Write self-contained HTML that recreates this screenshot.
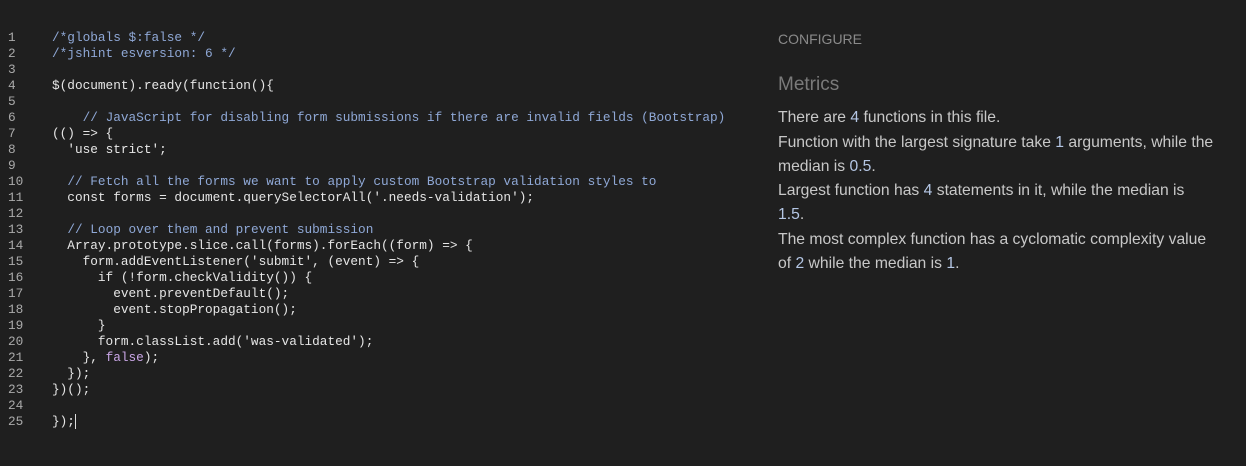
<!DOCTYPE html>
<html><head><style>
body{margin:0;width:1246px;height:466px;background:#1f1f1f;overflow:hidden;position:relative}
#code{position:absolute;left:0;top:30px;font:12.75px/16px "Liberation Mono",monospace;color:#e6e6e6;white-space:pre}
.ln{display:inline-block;width:52px;padding-left:8px;box-sizing:border-box;color:#aaa}
.c{color:#8fa8d6}.k{color:#c9a6e6}.s{color:#e8e8e8}
#side{position:absolute;left:778px;top:0;font-family:"Liberation Sans",sans-serif;color:#c8c8c8}
.cfg{position:absolute;top:31px;font-size:14px;color:#8a8a8a;white-space:nowrap}
.met{position:absolute;top:74px;font-size:19px;color:#7a7a7a}
.p{position:absolute;width:445px;font-size:15.7px;line-height:24px;color:#c8c8c8}
.n{color:#b4c6e4}
</style></head><body>
<div id="code"><span class="ln">1</span><span class="c">/*globals $:false */</span>
<span class="ln">2</span><span class="c">/*jshint esversion: 6 */</span>
<span class="ln">3</span>
<span class="ln">4</span>$(document).ready(function(){
<span class="ln">5</span>
<span class="ln">6</span>    <span class="c">// JavaScript for disabling form submissions if there are invalid fields (Bootstrap)</span>
<span class="ln">7</span>(() =&gt; {
<span class="ln">8</span>  <span class="s">'use strict'</span>;
<span class="ln">9</span>
<span class="ln">10</span>  <span class="c">// Fetch all the forms we want to apply custom Bootstrap validation styles to</span>
<span class="ln">11</span>  const forms = document.querySelectorAll('.needs-validation');
<span class="ln">12</span>
<span class="ln">13</span>  <span class="c">// Loop over them and prevent submission</span>
<span class="ln">14</span>  Array.prototype.slice.call(forms).forEach((form) =&gt; {
<span class="ln">15</span>    form.addEventListener('submit', (event) =&gt; {
<span class="ln">16</span>      if (!form.checkValidity()) {
<span class="ln">17</span>        event.preventDefault();
<span class="ln">18</span>        event.stopPropagation();
<span class="ln">19</span>      }
<span class="ln">20</span>      form.classList.add('was-validated');
<span class="ln">21</span>    }, <span class="k">false</span>);
<span class="ln">22</span>  });
<span class="ln">23</span>})();
<span class="ln">24</span>
<span class="ln">25</span>});<span style="border-left:1px solid #ddd"></span></div>
<div id="side">
<div class="cfg">CONFIGURE</div>
<div class="met">Metrics</div>
<div class="p" style="top:106px">There are <span class="n">4</span> functions in this file.</div>
<div class="p" style="top:131px">Function with the largest signature take <span class="n">1</span> arguments, while the median is <span class="n">0.5</span>.</div>
<div class="p" style="top:179px">Largest function has <span class="n">4</span> statements in it, while the median is<br><span class="n">1.5</span>.</div>
<div class="p" style="top:228px">The most complex function has a cyclomatic complexity value of <span class="n">2</span> while the median is <span class="n">1</span>.</div>
</div>
</body></html>
